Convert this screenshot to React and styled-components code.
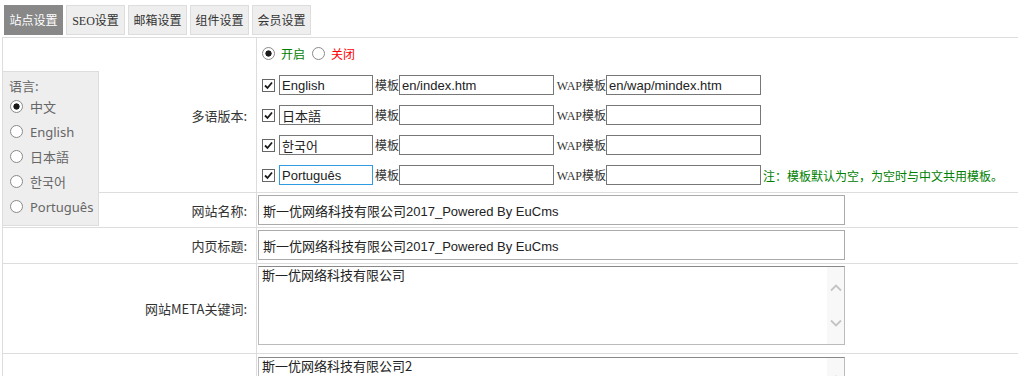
import React from 'react';
import styled, { createGlobalStyle } from 'styled-components';

const GlobalStyle = createGlobalStyle`
  html, body {
    margin: 0;
    padding: 0;
    background: #fff;
    overflow: hidden;
  }
  body {
    font-family: "Noto Sans CJK SC", sans-serif;
    font-size: 13px;
    color: #333;
  }
`;

const Page = styled.div`
  position: relative;
  padding: 5px 0 0 2px;
`;

const Tabs = styled.div`
  display: flex;
  gap: 3px;
  margin-left: 2px;
`;

const Tab = styled.div`
  width: 59px;
  height: 30px;
  box-sizing: border-box;
  display: flex;
  align-items: center;
  justify-content: center;
  font-family: "Liberation Serif", "Noto Sans CJK SC", serif;
  font-size: 12px;
  color: ${(p) => (p.$active ? '#fff' : '#333')};
  background: ${(p) => (p.$active ? '#888' : '#eee')};
  border: 1px solid ${(p) => (p.$active ? '#888' : '#ddd')};
`;

const Table = styled.div`
  margin-top: 2px;
  border-top: 1px solid #ddd;
  border-left: 1px solid #ddd;
`;

const Row = styled.div`
  display: grid;
  grid-template-columns: 254px 1fr;
  border-bottom: 1px solid #ddd;
`;

const LabelCell = styled.div`
  border-right: 1px solid #ddd;
  display: flex;
  align-items: center;
  justify-content: flex-end;
  padding-right: 9px;
  font-size: 13px;
  color: #333;
`;

const ValueCell = styled.div`
  padding: ${(p) => p.$pad || '2px 0 2px 1px'};
`;

const SwitchLine = styled.div`
  height: 22px;
  margin-bottom: 6px;
  display: flex;
  align-items: center;
  font-size: 12px;
`;

const Radio = styled.input.attrs({ type: 'radio', readOnly: true })`
  appearance: none;
  margin: 0;
  width: 13px;
  height: 13px;
  box-sizing: border-box;
  border-radius: 50%;
  border: 1px solid #8a8a8a;
  background: ${(p) =>
    p.checked ? 'radial-gradient(circle, #1a1a1a 0 2.8px, #fff 3.4px)' : '#fff'};
  flex: none;
`;

const SwitchText = styled.span`
  color: ${(p) => p.$color};
  margin: 0 7px 0 6px;
`;

const LangRow = styled.div`
  height: 30px;
  display: grid;
  grid-template-columns: 17px 94px 26px 155px 52px 155px auto;
  align-items: center;
`;

const Check = styled.span`
  width: 13px;
  height: 13px;
  box-sizing: border-box;
  border: 1px solid #666;
  background: #fff;
  display: flex;
  align-items: center;
  justify-content: center;
`;

const SmallInput = styled.input`
  width: 100%;
  height: 20px;
  box-sizing: border-box;
  border: 1px solid ${(p) => (p.$focused ? '#2f9be0' : '#777')};
  padding: 0 2px;
  margin: 0;
  font-family: "Liberation Sans", "Noto Sans CJK SC", sans-serif;
  font-size: 13px;
  color: #222;
  outline: none;
  background: #fff;
`;

const FieldLabel = styled.span`
  font-family: "Liberation Serif", "Noto Sans CJK SC", serif;
  font-size: 12px;
  color: #333;
  text-align: right;
  white-space: nowrap;
`;

const Note = styled.span`
  padding-left: 2px;
  font-size: 12px;
  color: #008000;
  white-space: nowrap;
`;

const WideInput = styled.input`
  width: 587px;
  height: 30px;
  box-sizing: border-box;
  margin: 0;
  border: 1px solid #aaa;
  padding: 0 4px;
  font-family: "Liberation Sans", "Noto Sans CJK SC", sans-serif;
  font-size: 13px;
  color: #222;
  outline: none;
  display: block;
`;

const TextBox = styled.div`
  width: 587px;
  height: 79px;
  box-sizing: border-box;
  display: flex;
  border: 1px solid #bbb;
  border-top-color: #888;
  background: #fff;
`;

const Area = styled.textarea`
  flex: 1;
  border: none;
  margin: 0;
  padding: 0 3px;
  resize: none;
  outline: none;
  overflow: hidden;
  font-family: "Noto Sans CJK SC", sans-serif;
  font-size: 13px;
  line-height: 15px;
  color: #222;
`;

const Track = styled.div`
  width: 17px;
  box-sizing: border-box;
  padding: 17px 0;
  background: #f8f8f8;
  display: flex;
  flex-direction: column;
  justify-content: space-between;
  align-items: center;
`;

const LangPanel = styled.div`
  position: absolute;
  left: 2px;
  top: 71px;
  width: 97px;
  height: 155px;
  box-sizing: border-box;
  padding: 6px 0 0 7px;
  background: #eee;
  border: 1px solid #ddd;
  color: #666;
  font-family: "Noto Sans", "Noto Sans CJK SC", sans-serif;
  font-size: 13px;
`;

const PanelTitle = styled.div`
  height: 16px;
  line-height: 16px;
  margin-left: -1px;
  font-family: "Noto Sans CJK SC", sans-serif;
`;

const PanelItem = styled.div`
  height: 25px;
  display: flex;
  align-items: center;
  gap: 7px;
`;

const Chevron = ({ down }) => (
  <svg width="12" height="8" viewBox="0 0 12 8">
    <polyline
      points={down ? '1,1.5 6,6.5 11,1.5' : '1,6.5 6,1.5 11,6.5'}
      fill="none"
      stroke="#c4c4c4"
      strokeWidth="1.8"
    />
  </svg>
);

const TickBox = () => (
  <Check>
    <svg width="11" height="11" viewBox="0 0 11 11">
      <polyline points="2,5.5 4.5,8 9,2.5" fill="none" stroke="#1a1a1a" strokeWidth="1.8" />
    </svg>
  </Check>
);

const ScrollArea = ({ text }) => (
  <TextBox>
    <Area defaultValue={text} />
    <Track>
      <Chevron />
      <Chevron down />
    </Track>
  </TextBox>
);

const tabs = ['站点设置', 'SEO设置', '邮箱设置', '组件设置', '会员设置'];

const langs = [
  { name: 'English', tpl: 'en/index.htm', wap: 'en/wap/mindex.htm' },
  { name: '日本語', tpl: '', wap: '' },
  { name: '한국어', tpl: '', wap: '' },
  { name: 'Português', tpl: '', wap: '', focused: true, note: '注：模板默认为空，为空时与中文共用模板。' },
];

const panelLangs = ['中文', 'English', '日本語', '한국어', 'Português'];

const title = '斯一优网络科技有限公司2017_Powered By EuCms';

const App = () => (
  <Page>
    <GlobalStyle />
    <Tabs>
      {tabs.map((t, i) => (
        <Tab key={t} $active={i === 0}>{t}</Tab>
      ))}
    </Tabs>
    <Table>
      <Row>
        <LabelCell>多语版本:</LabelCell>
        <ValueCell $pad="4px 0 2px 5px">
          <SwitchLine>
            <Radio checked />
            <SwitchText $color="#008000">开启</SwitchText>
            <Radio checked={false} />
            <SwitchText $color="#f00">关闭</SwitchText>
          </SwitchLine>
          {langs.map((l) => (
            <LangRow key={l.name}>
              <TickBox />
              <SmallInput defaultValue={l.name} $focused={l.focused} />
              <FieldLabel>模板</FieldLabel>
              <SmallInput defaultValue={l.tpl} />
              <FieldLabel>WAP模板</FieldLabel>
              <SmallInput defaultValue={l.wap} />
              {l.note ? <Note>{l.note}</Note> : <span />}
            </LangRow>
          ))}
        </ValueCell>
      </Row>
      <Row>
        <LabelCell>网站名称:</LabelCell>
        <ValueCell>
          <WideInput defaultValue={title} />
        </ValueCell>
      </Row>
      <Row>
        <LabelCell>内页标题:</LabelCell>
        <ValueCell $pad="2px 0 3px 1px">
          <WideInput defaultValue={title} />
        </ValueCell>
      </Row>
      <Row>
        <LabelCell>网站META关键词:</LabelCell>
        <ValueCell $pad="2px 0 8px 1px">
          <ScrollArea text="斯一优网络科技有限公司" />
        </ValueCell>
      </Row>
      <Row>
        <LabelCell />
        <ValueCell $pad="3px 0 8px 1px">
          <ScrollArea text="斯一优网络科技有限公司2" />
        </ValueCell>
      </Row>
    </Table>
    <LangPanel>
      <PanelTitle>语言:</PanelTitle>
      {panelLangs.map((l, i) => (
        <PanelItem key={l}>
          <Radio checked={i === 0} />
          <span>{l}</span>
        </PanelItem>
      ))}
    </LangPanel>
  </Page>
);

export default App;
